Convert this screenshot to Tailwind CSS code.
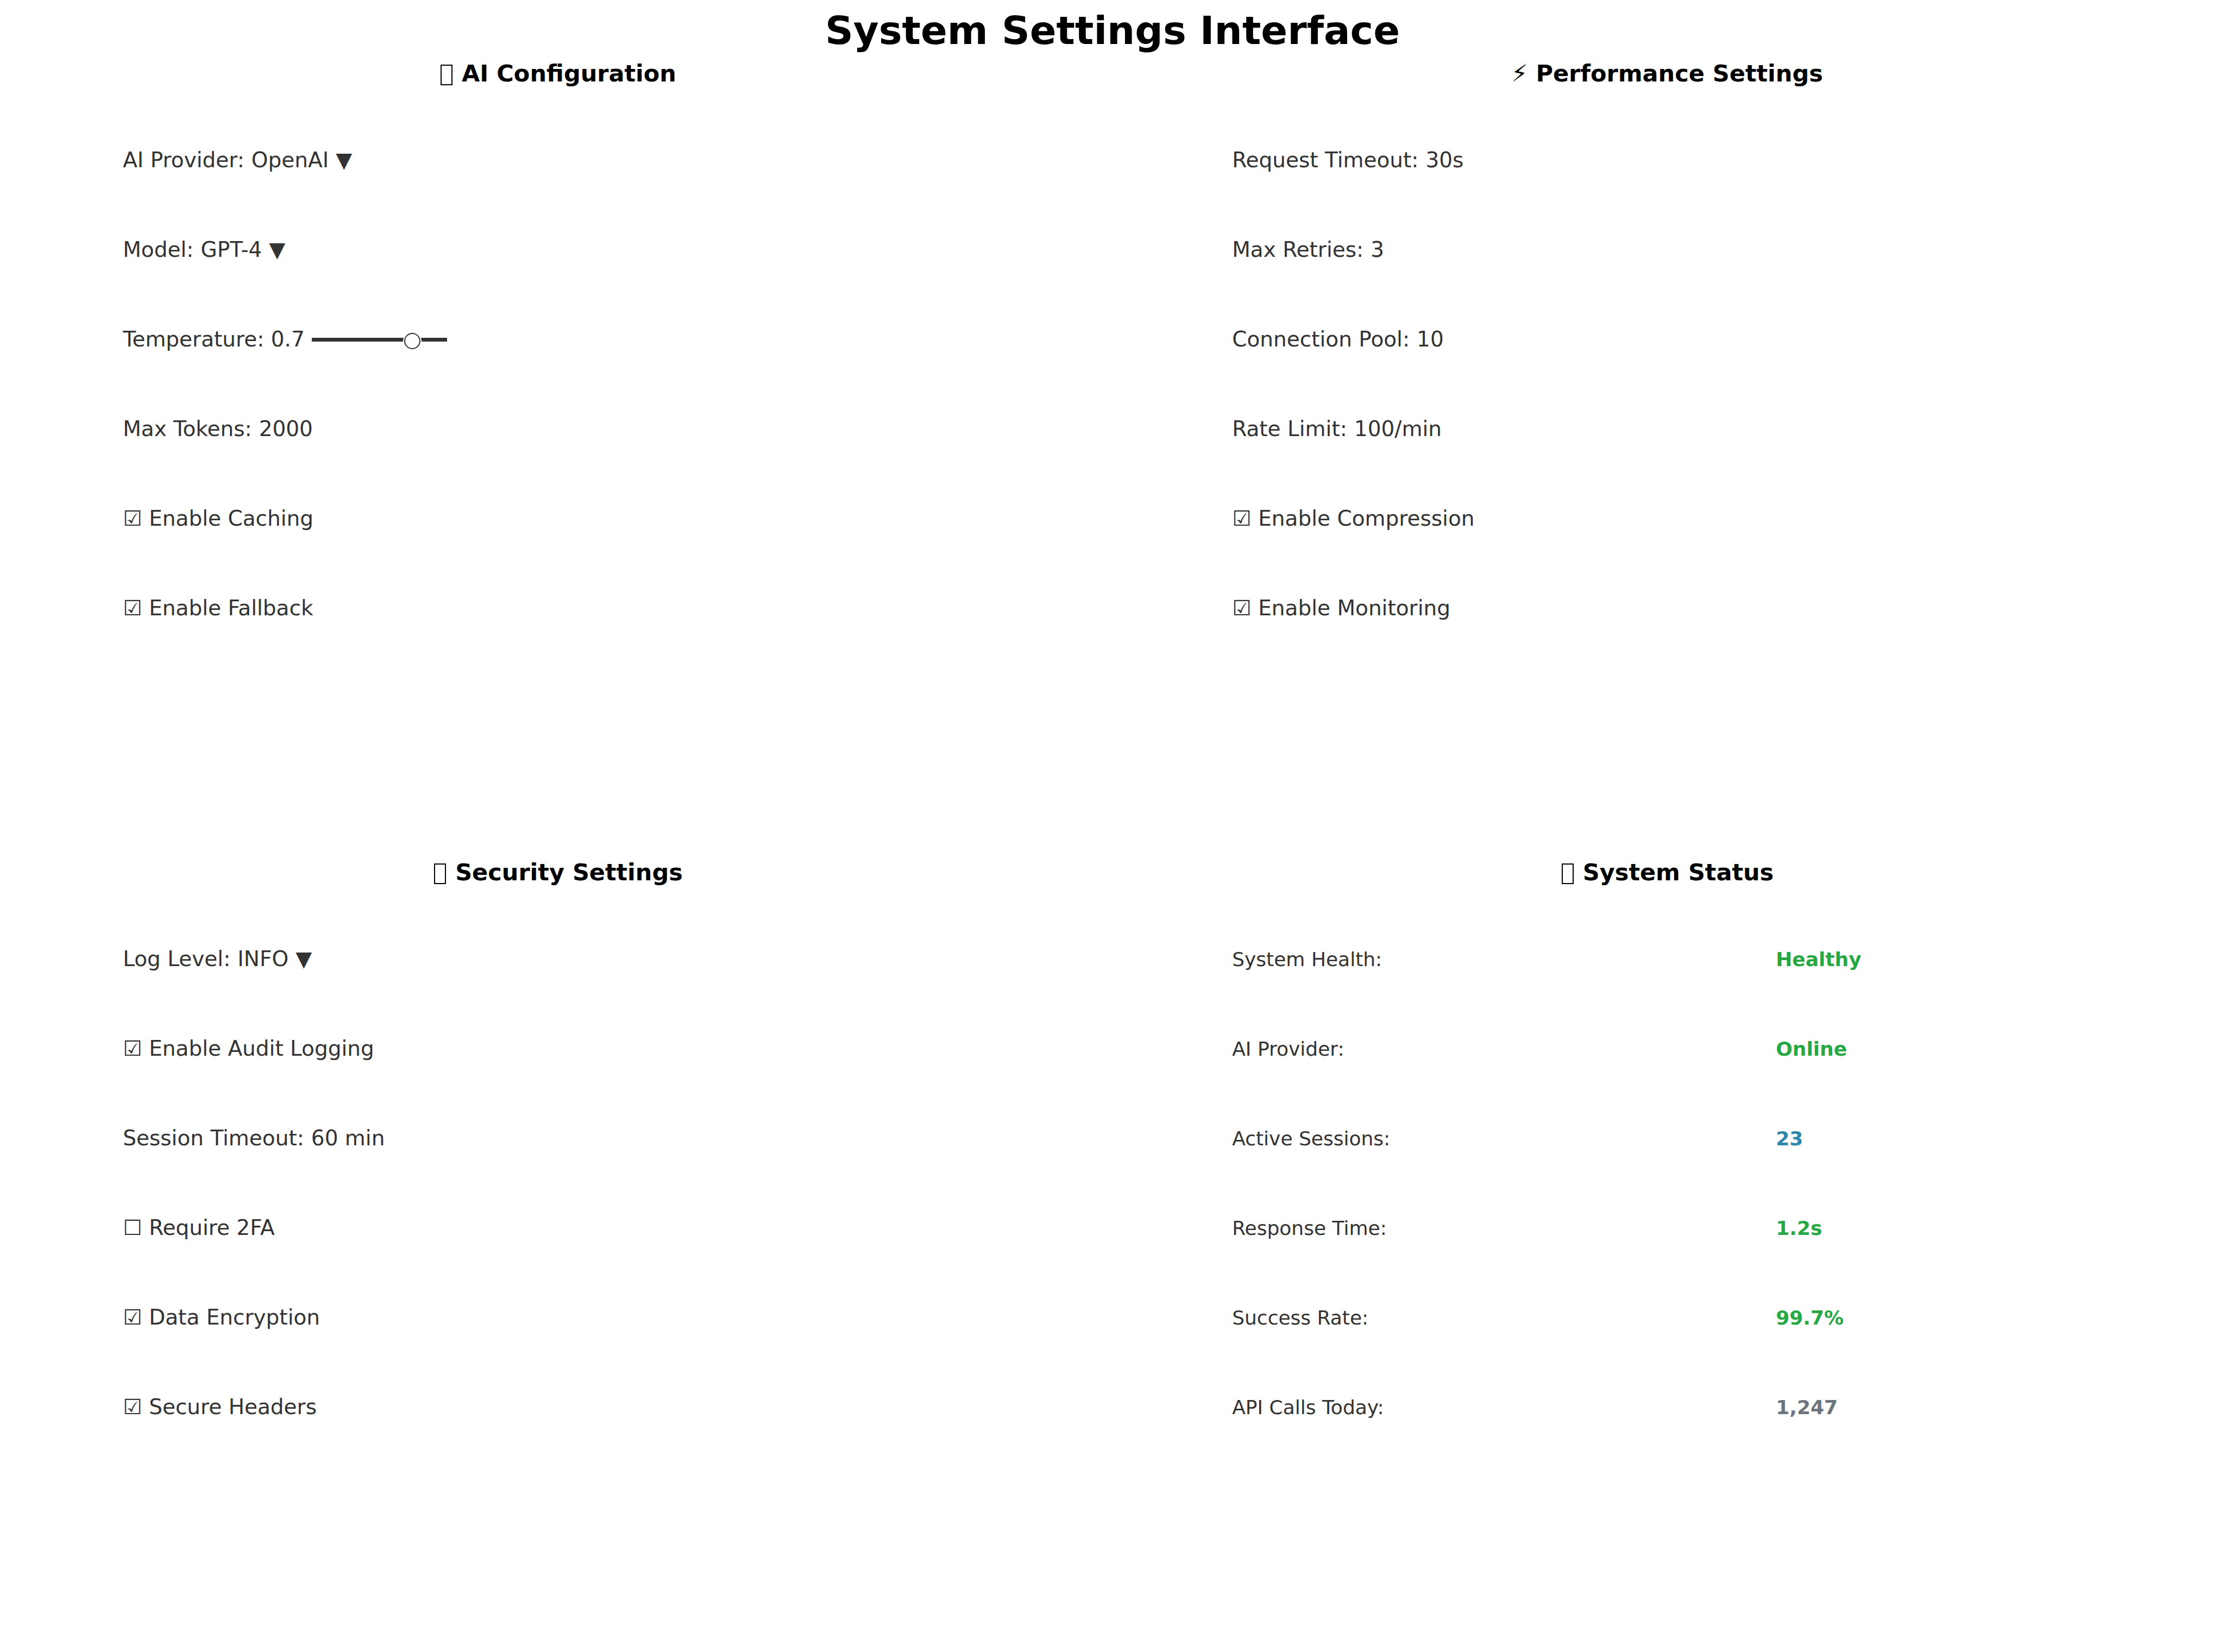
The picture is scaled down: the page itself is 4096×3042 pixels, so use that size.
<!DOCTYPE html>
<html lang="en">
<head>
<meta charset="utf-8">
<title>System Settings Interface</title>
<script src="https://cdn.jsdelivr.net/npm/@tailwindcss/browser@4"></script>
</head>
<body class="bg-white font-['DejaVu_Sans',sans-serif] text-[39px] text-[#333333]">
<main class="px-[26px]">
  <h1 class="pt-2 pb-px text-center text-[72px] leading-24 font-bold text-black">System Settings Interface</h1>
  <div class="grid grid-cols-2 gap-x-10 gap-y-[373px] pb-24">

    <section>
      <h2 class="mb-12 flex items-center justify-center gap-[15px] text-[43px] leading-[60px] font-bold text-black"><span class="mx-0.5 mt-1.5 h-[38px] w-[22px] border-2 border-black"></span>AI Configuration</h2>
      <div class="pl-[10%]">
        <div class="flex h-[165px] items-center gap-[13px]">
          <label for="provider">AI Provider:</label>
          <select id="provider" class="field-sizing-content appearance-none"><option>OpenAI</option></select>
          <span aria-hidden="true">▼</span>
        </div>
        <div class="flex h-[165px] items-center gap-[13px]">
          <label for="model">Model:</label>
          <select id="model" class="field-sizing-content appearance-none"><option>GPT-4</option></select>
          <span aria-hidden="true">▼</span>
        </div>
        <div class="flex h-[165px] items-center gap-[13px]">
          <label for="temperature">Temperature: 0.7</label>
          <input id="temperature" type="range" min="0" max="0.9" step="0.1" value="0.7" class="h-[7px] w-[249px] appearance-none bg-[#333333] [&::-webkit-slider-runnable-track]:h-[7px] [&::-webkit-slider-thumb]:mt-[-9px] [&::-webkit-slider-thumb]:size-[30px] [&::-webkit-slider-thumb]:appearance-none [&::-webkit-slider-thumb]:rounded-full [&::-webkit-slider-thumb]:border-2 [&::-webkit-slider-thumb]:border-[#333333] [&::-webkit-slider-thumb]:bg-white [&::-webkit-slider-thumb]:shadow-[2px_0_white,-2px_0_white]">
        </div>
        <div class="flex h-[165px] items-center gap-[13px]">
          <label for="tokens">Max Tokens:</label>
          <input id="tokens" type="text" value="2000" class="field-sizing-content">
        </div>
        <label class="flex h-[165px] items-center gap-[13px]"><input type="checkbox" checked class="appearance-none before:content-['☐'] checked:before:content-['☑']">Enable Caching</label>
        <label class="flex h-[165px] items-center gap-[13px]"><input type="checkbox" checked class="appearance-none before:content-['☐'] checked:before:content-['☑']">Enable Fallback</label>
      </div>
    </section>

    <section>
      <h2 class="mb-12 text-center text-[43px] leading-[60px] font-bold text-black">⚡&#xFE0E; Performance Settings</h2>
      <div class="pl-[10%]">
        <div class="flex h-[165px] items-center gap-[13px]">
          <label for="timeout">Request Timeout:</label>
          <input id="timeout" type="text" value="30s" class="field-sizing-content">
        </div>
        <div class="flex h-[165px] items-center gap-[13px]">
          <label for="retries">Max Retries:</label>
          <input id="retries" type="text" value="3" class="field-sizing-content">
        </div>
        <div class="flex h-[165px] items-center gap-[13px]">
          <label for="pool">Connection Pool:</label>
          <input id="pool" type="text" value="10" class="field-sizing-content">
        </div>
        <div class="flex h-[165px] items-center gap-[13px]">
          <label for="rate">Rate Limit:</label>
          <input id="rate" type="text" value="100/min" class="field-sizing-content">
        </div>
        <label class="flex h-[165px] items-center gap-[13px]"><input type="checkbox" checked class="appearance-none before:content-['☐'] checked:before:content-['☑']">Enable Compression</label>
        <label class="flex h-[165px] items-center gap-[13px]"><input type="checkbox" checked class="appearance-none before:content-['☐'] checked:before:content-['☑']">Enable Monitoring</label>
      </div>
    </section>

    <section>
      <h2 class="mb-12 flex items-center justify-center gap-[15px] text-[43px] leading-[60px] font-bold text-black"><span class="mx-0.5 mt-1.5 h-[38px] w-[22px] border-2 border-black"></span>Security Settings</h2>
      <div class="pl-[10%]">
        <div class="flex h-[165px] items-center gap-[13px]">
          <label for="log">Log Level:</label>
          <select id="log" class="field-sizing-content appearance-none"><option>INFO</option></select>
          <span aria-hidden="true">▼</span>
        </div>
        <label class="flex h-[165px] items-center gap-[13px]"><input type="checkbox" checked class="appearance-none before:content-['☐'] checked:before:content-['☑']">Enable Audit Logging</label>
        <div class="flex h-[165px] items-center gap-[13px]">
          <label for="session">Session Timeout:</label>
          <input id="session" type="text" value="60 min" class="field-sizing-content">
        </div>
        <label class="flex h-[165px] items-center gap-[13px]"><input type="checkbox" class="appearance-none before:content-['☐'] checked:before:content-['☑']">Require 2FA</label>
        <label class="flex h-[165px] items-center gap-[13px]"><input type="checkbox" checked class="appearance-none before:content-['☐'] checked:before:content-['☑']">Data Encryption</label>
        <label class="flex h-[165px] items-center gap-[13px]"><input type="checkbox" checked class="appearance-none before:content-['☐'] checked:before:content-['☑']">Secure Headers</label>
      </div>
    </section>

    <section>
      <h2 class="mb-12 flex items-center justify-center gap-[15px] text-[43px] leading-[60px] font-bold text-black"><span class="mx-0.5 mt-1.5 h-[38px] w-[22px] border-2 border-black"></span>System Status</h2>
      <div class="pl-[10%]">
        <table class="w-full table-fixed text-left text-[36px]">
          <colgroup><col class="w-5/9"><col></colgroup>
          <tbody>
            <tr class="h-[165px]"><th scope="row" class="p-0 font-normal">System Health:</th><td class="p-0 font-bold text-[#28a745]">Healthy</td></tr>
            <tr class="h-[165px]"><th scope="row" class="p-0 font-normal">AI Provider:</th><td class="p-0 font-bold text-[#28a745]">Online</td></tr>
            <tr class="h-[165px]"><th scope="row" class="p-0 font-normal">Active Sessions:</th><td class="p-0 font-bold text-[#2e86ab]">23</td></tr>
            <tr class="h-[165px]"><th scope="row" class="p-0 font-normal">Response Time:</th><td class="p-0 font-bold text-[#28a745]">1.2s</td></tr>
            <tr class="h-[165px]"><th scope="row" class="p-0 font-normal">Success Rate:</th><td class="p-0 font-bold text-[#28a745]">99.7%</td></tr>
            <tr class="h-[165px]"><th scope="row" class="p-0 font-normal">API Calls Today:</th><td class="p-0 font-bold text-[#6c757d]">1,247</td></tr>
          </tbody>
        </table>
      </div>
    </section>

  </div>
</main>
</body>
</html>
